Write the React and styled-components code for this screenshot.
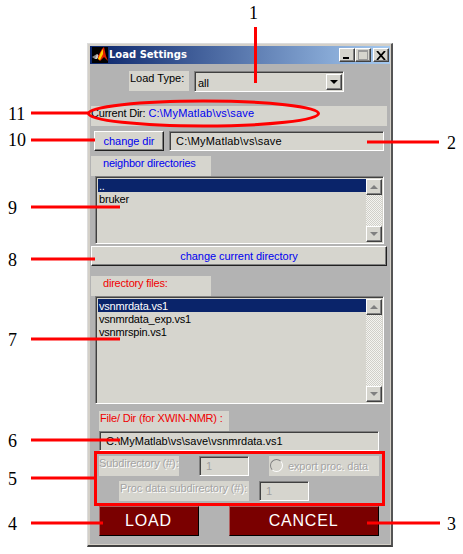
import React from "react";
import styled, { createGlobalStyle, css } from "styled-components";

const Global = createGlobalStyle`
  html, body { margin: 0; padding: 0; background: #fff; }
  * { box-sizing: border-box; }
`;

const ctl = "#d6d5ce";
const Page = styled.div`
  position: relative; width: 463px; height: 554px; overflow: hidden; background: #fff;
  padding: 43px 0 0 87px;
  font: 11px/14px "Liberation Sans", Arial, sans-serif; color: #000;
`;
const Win = styled.div`
  width: 306px; height: 504px;
  border-style: solid; border-width: 1px 2px 2px 1px;
  border-color: #dcdcdc #555 #404040 #dcdcdc;
  background: #d4d0c8; padding: 2px 1px 1px 2px;
`;
const TitleBar = styled.div`
  height: 18px; display: flex; align-items: center; padding: 0 1px 0 2px;
  background: linear-gradient(90deg, #0a246a, #a6caf0);
`;
const Title = styled.span`
  margin-left: 1px; flex: 1; color: #fff; font-weight: 700;
  font-family: "DejaVu Sans", sans-serif; font-size: 10px;
`;
const raised = css`
  background: ${ctl};
  border-style: solid; border-width: 1px;
  border-color: #fff #404040 #404040 #fff;
  box-shadow: inset -1px -1px 0 #808080;
`;
const sunken = css`
  background: ${ctl};
  border-style: solid; border-width: 1px;
  border-color: #808080 #fff #fff #808080;
  box-shadow: inset 1px 1px 0 #404040;
`;
const WinBtn = styled.button`
  ${raised}
  width: 16px; height: 14px; padding: 0; margin-left: ${p => p.$gap || 0}px;
  display: flex; align-items: center; justify-content: center;
`;
const Client = styled.div`
  height: 480px; background: #b3b3b3; padding-top: 7px; display: flex; flex-direction: column;
`;
const Row = styled.div`
  display: flex; align-items: flex-start;
  margin: ${p => p.$top || 0}px 0 0 ${p => p.$left || 0}px;
  gap: ${p => p.$gap || 0}px;
`;
const Label = styled.div`
  background: ${ctl}; width: ${p => p.$w}px; height: 20px; flex: none;
  margin: ${p => p.$top || 0}px 0 0 ${p => p.$left || 0}px;
  padding-left: ${p => p.$pad ?? 1}px; white-space: nowrap; overflow: hidden;
  color: ${p => p.$color || "#000"};
`;
const TightLabel = styled(Label)`letter-spacing: -.2px;`;
const Blue = styled.span`color: #0000f0; margin-left: 3px; letter-spacing: .2px;`;
const Edit = styled.div`
  ${sunken}
  width: ${p => p.$w}px; height: 20px; flex: none; padding: 2px 0 0 6px;
  margin-left: ${p => p.$left || 0}px;
  color: ${p => p.$muted ? "#a0a0a0" : "#000"};
  white-space: nowrap; letter-spacing: ${p => p.$wide ? ".2px" : "0"};
`;
const Select = styled(Edit)`
  height: 21px; padding: 4px 0 0 3px; display: flex; position: relative;
  span { flex: 1; }
`;
const Arrow = styled.div`
  ${raised}
  width: 16px; height: 16px; flex: none; margin: -2px 1px 0 0;
  display: flex; align-items: center; justify-content: center;
`;
const Tri = styled.i`
  display: block; width: 0; height: 0;
  border-left: 4px solid transparent; border-right: 4px solid transparent;
  ${p => p.$up ? "border-bottom" : "border-top"}: 4px solid ${p => p.$c || "#000"};
`;
const Btn = styled.button`
  ${raised}
  width: ${p => p.$w}px; height: 20px; padding: 0; flex: none;
  font: inherit; color: #0000f0; letter-spacing: -.05px;
  margin: ${p => p.$top || 0}px 0 0 ${p => p.$left || 0}px;
  border-color: #fff #202020 #202020 #fff;
`;
const List = styled.div`
  ${sunken}
  margin-left: 5px; width: 289px; height: ${p => p.$h}px; flex: none;
  padding: 2px 1px 1px 2px; display: flex;
`;
const Items = styled.div`flex: 1; min-width: 0;`;
const Item = styled.div`
  height: 13px; line-height: 14px; padding-left: 1px; letter-spacing: -.2px;
  ${p => p.$sel && "background: #0a246a; color: #fff;"}
`;
const Bar = styled.div`
  width: 16px; flex: none; display: flex; flex-direction: column;
  background: repeating-conic-gradient(#d0cfc9 0 25%, #f4f4f0 0 50%) 0 0 / 2px 2px;
`;
const BarBtn = styled.div`
  ${raised}
  height: 16px; width: 16px; display: flex; align-items: center; justify-content: center;
  margin-top: ${p => p.$end ? "auto" : 0};
`;
const Group = styled.div`
  border: 3px solid #f00; width: 291px; height: 55px; margin-left: 4px; flex: none;
  padding: 2px 0 0 2px; color: #a4a4a4;
`;
const Radio = styled.i`
  display: block; flex: none; width: 13px; height: 13px; border-radius: 50%; margin: 2px 5px 0 1px;
  border: 1px solid; border-color: #808080 #fff #fff #808080; background: ${ctl};
`;
const Check = styled.div`
  display: flex; width: 110px; height: 20px; background: ${ctl}; padding-top: 1px; margin-left: 20px;
  color: #a4a4a4; white-space: nowrap; letter-spacing: -.15px;
  span { padding-top: 2px; text-shadow: 1px 1px 0 #fff; }
`;
const Muted = styled(Label)`color: #a4a4a4; text-shadow: 1px 1px 0 #fff; letter-spacing: -.1px;`;
const Action = styled.button`
  width: ${p => p.$w}px; height: 30px; background: #7a0000; color: #fff; padding: 0 1px 0 0;
  border: 1px solid; border-color: #b06060 #000 #000 #b06060;
  font: 16px "Liberation Sans", Arial, sans-serif;
  letter-spacing: .8px;
`;
const Overlay = styled.svg`
  position: absolute; left: 0; top: 0; pointer-events: none;
`;
const Num = styled.div`
  position: absolute; left: ${p => p.$x}px; top: ${p => p.$y}px;
  font: 18px/20px "Liberation Serif", "Times New Roman", serif; color: #000;
`;

const lines = [
  [255.5, 27, 255.5, 83], [367, 142, 439, 142], [31, 113, 89, 113], [31, 140, 95, 140],
  [31, 207, 120, 207], [31, 259, 95, 259], [31, 339, 120, 339], [31, 440, 120, 440],
  [31, 478, 94, 478], [31, 523, 103, 523], [367, 523, 440, 523],
];
const nums = [
  ["1", 249, 3], ["2", 447, 133], ["3", 447, 514], ["4", 8, 514], ["5", 8, 469], ["6", 8, 431],
  ["7", 8, 330], ["8", 8, 250], ["9", 8, 198], ["10", 8, 130], ["11", 8, 104],
];

const Logo = () => (
  <svg width="16" height="16" viewBox="0 0 16 16">
    <rect width="16" height="16" fill="#000" />
    <path d="M0 10 L5 7 L7 9 L3 12Z" fill="#8a8a8a" />
    <path d="M5 7 L7 9 L5 12 L3 12Z" fill="#c8c8c8" />
    <path d="M6 9 L10 2 L12 0 L14 9 L16 14 L12 10 L8 14 L6 12Z" fill="#e02000" />
    <path d="M9 5 L11 2 L11 7 L8 13 L6 12Z" fill="#ffd000" />
  </svg>
);

const Scroll = () => (
  <Bar>
    <BarBtn><Tri $up $c="#808080" /></BarBtn>
    <BarBtn $end><Tri $c="#808080" /></BarBtn>
  </Bar>
);

export default function App() {
  return (
    <Page>
      <Global />
      <Win>
        <TitleBar>
          <Logo />
          <Title>Load Settings</Title>
          <WinBtn>
            <svg width="8" height="8"><rect x="0" y="6" width="6" height="2" fill="#000" /></svg>
          </WinBtn>
          <WinBtn>
            <svg width="10" height="10"><rect x=".5" y=".5" width="9" height="9" fill="none" stroke="#9a9a9a" /><rect x="0" y="0" width="10" height="2" fill="#9a9a9a" /></svg>
          </WinBtn>
          <WinBtn $gap={2}>
            <svg width="10" height="9"><path d="M1 0 L9 9 M9 0 L1 9" stroke="#000" strokeWidth="1.8" /></svg>
          </WinBtn>
        </TitleBar>
        <Client>
          <Row $left={39} $gap={5}>
            <Label $w={60} $pad={1}>Load Type:</Label>
            <Select as="div" $w={150}>
              <span>all</span>
              <Arrow><Tri /></Arrow>
            </Select>
          </Row>
          <TightLabel $w={296} $left={1} $top={14} $pad={0}>
            Current Dir:<Blue>C:\MyMatlab\vs\save</Blue>
          </TightLabel>
          <Row $left={4} $top={5} $gap={5}>
            <Btn $w={70}>change dir</Btn>
            <Edit $w={215} $wide>C:\MyMatlab\vs\save</Edit>
          </Row>
          <TightLabel $w={120} $left={1} $top={5} $pad={12} $color="#0000f0">neighbor directories</TightLabel>
          <List $h={68}>
            <Items>
              <Item $sel>..</Item>
              <Item>bruker</Item>
            </Items>
            <Scroll />
          </List>
          <Btn $w={296} $left={1} $top={2}>change current directory</Btn>
          <TightLabel $w={120} $left={1} $top={10} $pad={12} $color="#f00000">directory files:</TightLabel>
          <List $h={108}>
            <Items>
              <Item $sel>vsnmrdata.vs1</Item>
              <Item>vsnmrdata_exp.vs1</Item>
              <Item>vsnmrspin.vs1</Item>
            </Items>
            <Scroll />
          </List>
          <TightLabel $w={130} $left={9} $top={7} $color="#f00000">File/ Dir (for XWIN-NMR) :</TightLabel>
          <Edit $w={280} $left={9}>C:\MyMatlab\vs\save\vsnmrdata.vs1</Edit>
          <Group>
            <Row>
              <Muted $w={80} $pad={0}>Subdirectory (#):</Muted>
              <Edit $w={50} $left={20} $muted>1</Edit>
              <Check><Radio /><span>export proc. data</span></Check>
            </Row>
            <Row $left={20} $top={5}>
              <Muted $w={130}>Proc data subdirectory (#):</Muted>
              <Edit $w={50} $left={10} $muted>1</Edit>
            </Row>
          </Group>
          <Row $left={9} $gap={30}>
            <Action $w={100}>LOAD</Action>
            <Action $w={150}>CANCEL</Action>
          </Row>
        </Client>
      </Win>
      <Overlay width="463" height="554">
        <ellipse cx="203.5" cy="113.5" rx="115" ry="12.5" fill="none" stroke="#f00" strokeWidth="3" />
        {lines.map((l, i) => (
          <line key={i} x1={l[0]} y1={l[1]} x2={l[2]} y2={l[3]} stroke="#f00" strokeWidth="3" />
        ))}
      </Overlay>
      {nums.map(([t, x, y]) => <Num key={t} $x={x} $y={y}>{t}</Num>)}
    </Page>
  );
}
